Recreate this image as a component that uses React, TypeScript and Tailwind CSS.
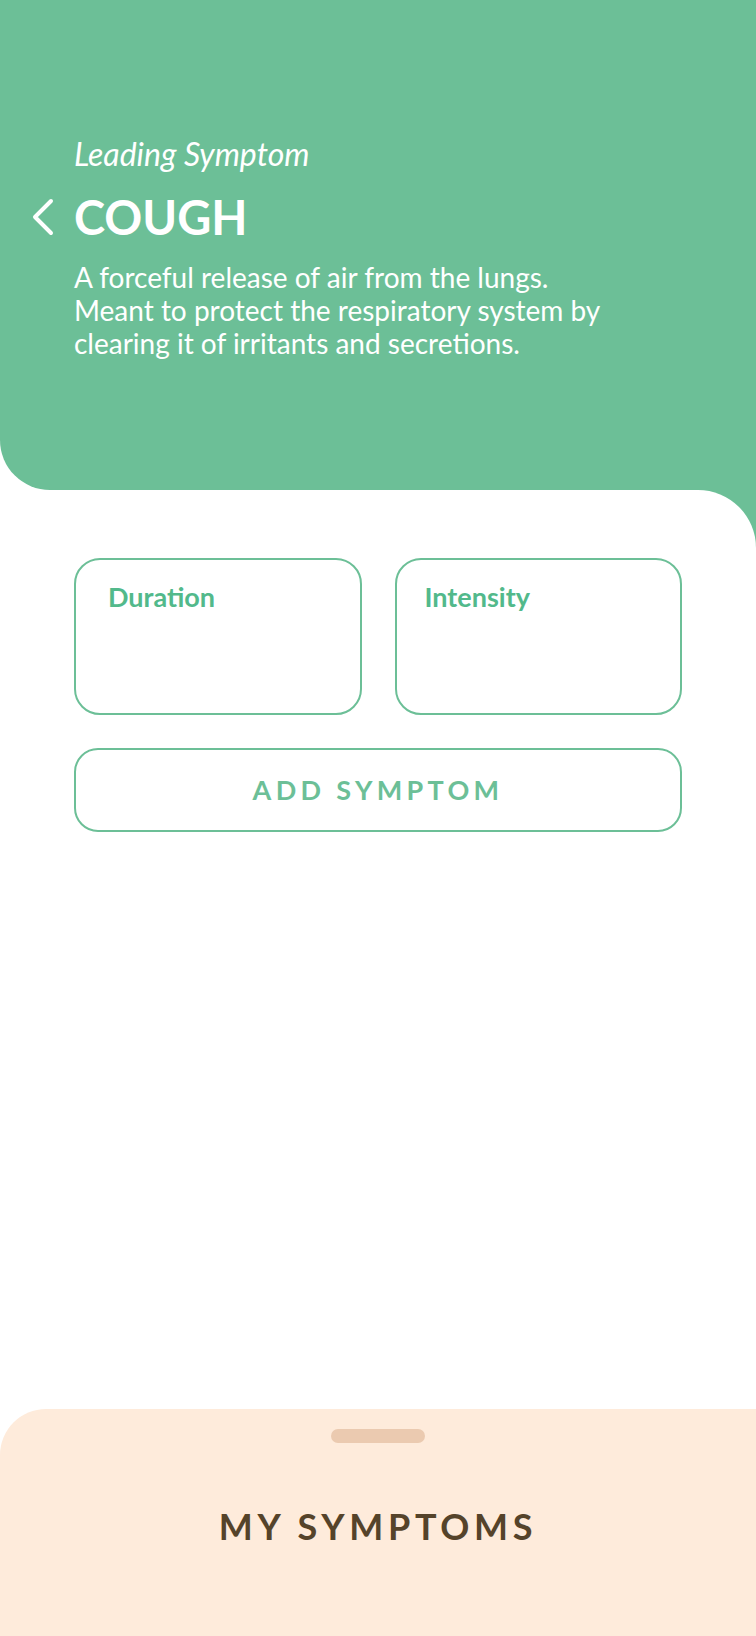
const GREEN = "#6cbf97"

function FieldCard({ label, className }: { label: string; className: string }) {
  return (
    <div className={`h-[157px] rounded-[26px] border-2 border-[#6cbf97] pt-[17px] ${className}`}>
      <span className="text-[27px] font-bold text-[#52b98b]">{label}</span>
    </div>
  )
}

export default function App() {
  return (
    <div
      className="flex min-h-screen flex-col bg-white"
      style={{ fontFamily: "Lato, 'Open Sans', sans-serif" }}
    >
      {/* Header */}
      <header className="h-[490px] rounded-bl-[50px] bg-[#6cbf97] pl-[74px] pr-[30px] pt-[135px] text-white">
        <p className="text-[32px] italic leading-[38px]">Leading Symptom</p>
        <div className="-ml-[42px] mt-[14px] flex items-center gap-[20px]">
          <svg width="22" height="38" viewBox="0 0 22 38" fill="none" className="shrink-0">
            <polyline
              points="19,3 3,19 19,35"
              stroke="white"
              strokeWidth="4"
              strokeLinecap="round"
              strokeLinejoin="round"
            />
          </svg>
          <h1 className="text-[47px] font-bold leading-[60px]">COUGH</h1>
        </div>
        <p className="mt-[14px] text-[28px] leading-[33px]">
          A forceful release of air from the lungs.
          <br />
          Meant to protect the respiratory system by
          <br />
          clearing it of irritants and secretions.
        </p>
      </header>

      {/* Body */}
      <div className="flex flex-1 flex-col" style={{ backgroundColor: GREEN }}>
        <main className="flex-1 rounded-tr-[58px] bg-white px-[74px] pt-[68px]">
          <div className="grid grid-cols-2 gap-[33px]">
            <FieldCard label="Duration" className="px-[32px]" />
            <FieldCard label="Intensity" className="px-[28px]" />
          </div>
          <button className="mt-[33px] flex h-[84px] w-full items-center justify-center rounded-[24px] border-2 border-[#6cbf97] text-[27px] font-bold tracking-[0.16em] text-[#6cbf97]">
            ADD SYMPTOM
          </button>
        </main>
      </div>

      {/* Bottom sheet */}
      <section className="flex h-[227px] flex-col items-center rounded-tl-[46px] bg-[#feebdb] pt-[20px]">
        <div className="h-[14px] w-[94px] rounded-full bg-[#ebcab0]" />
        <h2 className="mt-[56px] text-[36px] font-bold tracking-[0.13em] text-[#55432a]">
          MY SYMPTOMS
        </h2>
      </section>
    </div>
  )
}
